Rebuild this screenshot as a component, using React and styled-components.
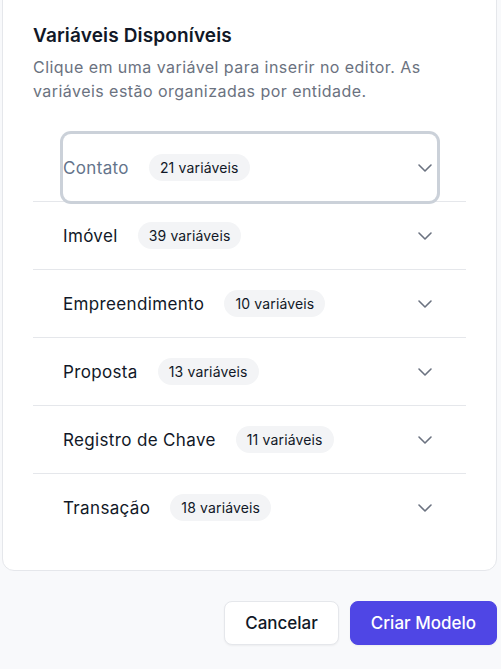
import React, { useState } from 'react'
import styled, { createGlobalStyle } from 'styled-components'

const GlobalStyle = createGlobalStyle`
  html, body {
    margin: 0;
    padding: 0;
    background: #f8f9fb;
    font-family: Inter, "Noto Sans", sans-serif;
    color: #111827;
  }
  * { box-sizing: border-box; }
`

const Page = styled.div`
  width: 501px;
  height: 669px;
  overflow: hidden;
  padding: 0 4px 0 2px;
`

const Card = styled.div`
  margin-top: -12px;
  background: #fff;
  border: 1px solid #e5e7eb;
  border-radius: 12px;
  padding: 34px 30px 29px 30px;
`

const Title = styled.h2`
  margin: 0;
  font-size: 19px;
  font-weight: 600;
  line-height: 26px;
  letter-spacing: 0.15px;
  color: #111827;
`

const Description = styled.p`
  margin: 6px 0 0;
  font-size: 16px;
  line-height: 24px;
  letter-spacing: 0.45px;
  color: #6b7280;
`

const List = styled.div`
  margin-top: 31px;
`

const Item = styled.div`
  border-bottom: 1px solid #e5e7eb;
  &:last-child {
    border-bottom: none;
  }
`

const Trigger = styled.button`
  display: flex;
  align-items: center;
  width: calc(100% - 59px);
  height: 67px;
  margin: 0 28px 0 30px;
  padding: 0;
  background: none;
  border: none;
  border-radius: 8px;
  font-family: inherit;
  cursor: pointer;
  text-align: left;
  ${({ $focused }) => $focused && `
    box-shadow: 0 0 0 3px #cbd1d9;
  `}
`

const Label = styled.span`
  font-size: 17px;
  font-weight: 400;
  letter-spacing: 0.35px;
  color: ${({ $muted }) => ($muted ? '#64748b' : '#111827')};
`

const Badge = styled.span`
  margin-left: 20px;
  padding: 4px 11px;
  border-radius: 999px;
  background: #f3f4f6;
  font-size: 14px;
  line-height: 19px;
  letter-spacing: 0.15px;
  color: #111827;
`

const Chevron = styled.span`
  margin-left: auto;
  display: flex;
  color: #6b7280;
  transform: ${({ $open }) => ($open ? 'rotate(180deg)' : 'none')};
`

const Footer = styled.div`
  display: flex;
  justify-content: flex-end;
  gap: 11px;
  margin-top: 30px;
`

const Button = styled.button`
  height: 44px;
  padding: 0 20px;
  border-radius: 8px;
  font-family: inherit;
  font-size: 17px;
  font-weight: 500;
  cursor: pointer;
  border: 1px solid ${({ $primary }) => ($primary ? '#4f46e5' : '#e5e7eb')};
  background: ${({ $primary }) => ($primary ? '#4f46e5' : '#fff')};
  color: ${({ $primary }) => ($primary ? '#fff' : '#111827')};
  box-shadow: 0 1px 2px rgba(0, 0, 0, 0.05);
`

const groups = [
  { name: 'Contato', count: 21 },
  { name: 'Imóvel', count: 39 },
  { name: 'Empreendimento', count: 10 },
  { name: 'Proposta', count: 13 },
  { name: 'Registro de Chave', count: 11 },
  { name: 'Transação', count: 18 },
]

function ChevronDown() {
  return (
    <svg width="24" height="24" viewBox="0 0 24 24" fill="none" stroke="currentColor" strokeWidth="1.6" strokeLinecap="round" strokeLinejoin="round">
      <path d="m6 9 6 6 6-6" />
    </svg>
  )
}

export default function App() {
  const [open, setOpen] = useState(null)

  return (
    <>
      <GlobalStyle />
      <Page>
        <Card>
          <Title>Variáveis Disponíveis</Title>
          <Description>
            Clique em uma variável para inserir no editor. As variáveis estão organizadas por entidade.
          </Description>
          <List>
            {groups.map((g, i) => (
              <Item key={g.name}>
                <Trigger $focused={i === 0} onClick={() => setOpen(open === i ? null : i)}>
                  <Label $muted={i === 0}>{g.name}</Label>
                  <Badge>{g.count} variáveis</Badge>
                  <Chevron $open={open === i}>
                    <ChevronDown />
                  </Chevron>
                </Trigger>
              </Item>
            ))}
          </List>
        </Card>
        <Footer>
          <Button>Cancelar</Button>
          <Button $primary>Criar Modelo</Button>
        </Footer>
      </Page>
    </>
  )
}
